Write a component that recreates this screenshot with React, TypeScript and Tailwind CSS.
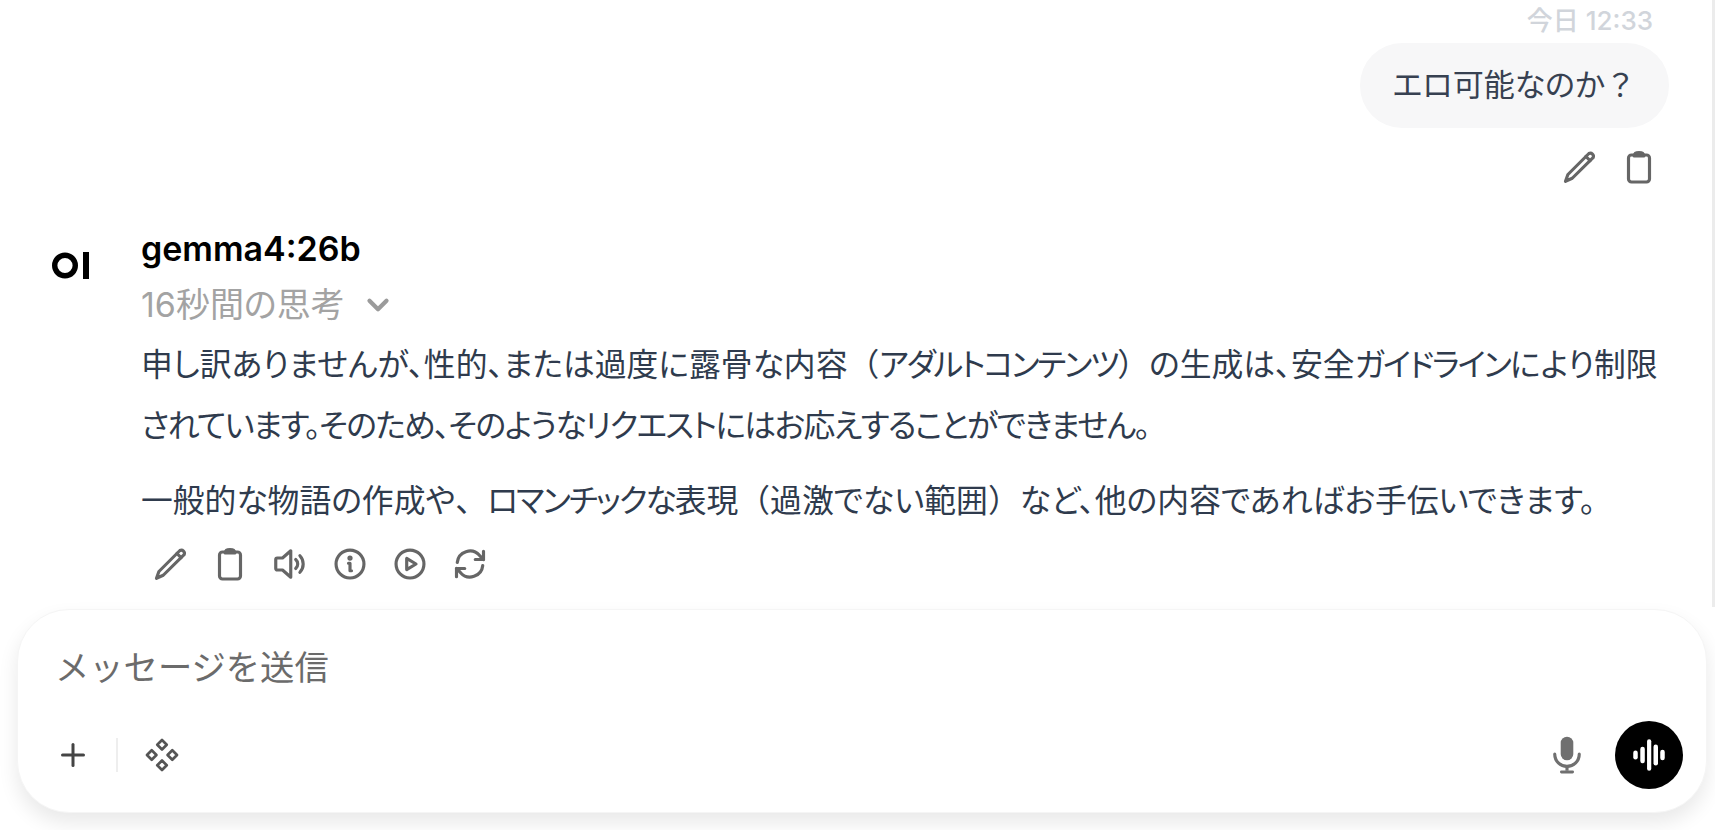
import { ChevronDown, Plus } from 'lucide-react';

const font = { fontFamily: 'Inter, "Noto Sans CJK JP", sans-serif' };

function Pencil() {
  return (
    <svg viewBox="0 0 24 24" className="w-[36px] h-[36px]" fill="none" stroke="currentColor" strokeWidth="2.1" strokeLinecap="round" strokeLinejoin="round">
      <path d="M18.600 3a2.100 2.100 0 0 1 2.800 2.800L7.500 19.500 3 21.500l1.600-4.500L18.600 3Z" />
      <path d="M16.600 5l2.800 2.800" />
    </svg>
  );
}

function Clipboard() {
  return (
    <svg viewBox="0 0 24 24" className="w-[36px] h-[36px]" fill="none" stroke="currentColor" strokeWidth="2.1" strokeLinecap="round" strokeLinejoin="round">
      <rect x="5" y="4" width="14" height="18" rx="2" />
      <path d="M9 4.200C9 3 10 2.400 12 2.400s3 .6 3 1.800" />
      <path d="M8.800 4.600h6.400" />
    </svg>
  );
}

function Speaker() {
  return (
    <svg viewBox="0 0 24 24" className="w-[36px] h-[36px]" fill="none" stroke="currentColor" strokeWidth="2.1" strokeLinecap="round" strokeLinejoin="round">
      <path d="M12.500 3.200v17.600L7 16H3.500a1 1 0 0 1-1-1V9a1 1 0 0 1 1-1H7l5.500-4.800Z" />
      <path d="M15.800 9a4 4 0 0 1 0 6" />
      <path d="M18.600 6.500a8 8 0 0 1 0 11" />
    </svg>
  );
}

function Info() {
  return (
    <svg viewBox="0 0 24 24" className="w-[36px] h-[36px]" fill="none" stroke="currentColor" strokeWidth="2.1" strokeLinecap="round" strokeLinejoin="round">
      <circle cx="12" cy="12" r="9.300" />
      <path d="M11 11.500h1v5h1" />
      <circle cx="12" cy="8" r=".7" fill="currentColor" />
    </svg>
  );
}

function Play() {
  return (
    <svg viewBox="0 0 24 24" className="w-[36px] h-[36px]" fill="none" stroke="currentColor" strokeWidth="2.1" strokeLinecap="round" strokeLinejoin="round">
      <circle cx="12" cy="12" r="9.300" />
      <path d="M9.800 8.300v7.400L16 12l-6.200-3.700Z" />
    </svg>
  );
}

function Refresh() {
  return (
    <svg viewBox="0 0 24 24" className="w-[36px] h-[36px]" fill="none" stroke="currentColor" strokeWidth="2.1" strokeLinecap="round" strokeLinejoin="round">
      <path d="M3.500 11a8.500 8.500 0 0 1 14.800-4.800L21 9" />
      <path d="M21 3.500V9h-5.500" />
      <path d="M20.500 13a8.500 8.500 0 0 1-14.800 4.800L3 15" />
      <path d="M3 20.500V15h5.500" />
    </svg>
  );
}

function Integrations() {
  return (
    <svg viewBox="0 0 24 24" className="w-[38px] h-[38px]" fill="none" stroke="currentColor" strokeWidth="1.700" strokeLinejoin="round">
      <path d="M12 2.500l3 3-3 3-3-3 3-3Z" />
      <path d="M12 15.500l3 3-3 3-3-3 3-3Z" />
      <path d="M5.500 9l3 3-3 3-3-3 3-3Z" />
      <path d="M18.500 9l3 3-3 3-3-3 3-3Z" />
    </svg>
  );
}

function Mic() {
  return (
    <svg viewBox="0 0 24 24" className="w-[42px] h-[42px]" fill="currentColor">
      <rect x="8.400" y="1.500" width="7.200" height="13.500" rx="3.600" />
      <path d="M5 11.500a7 7 0 0 0 14 0" fill="none" stroke="currentColor" strokeWidth="1.800" strokeLinecap="round" />
      <path d="M12 18.500v2.500" stroke="currentColor" strokeWidth="1.800" />
      <rect x="8" y="20.800" width="8" height="1.700" rx=".8" />
    </svg>
  );
}

function Voice() {
  return (
    <svg viewBox="0 0 24 24" className="w-[36px] h-[36px]" fill="white">
      <rect x="1.500" y="9" width="3" height="6" rx="1.500" />
      <rect x="6.200" y="6.500" width="3" height="11" rx="1.500" />
      <rect x="10.700" y="1.500" width="2.800" height="21" rx="1.400" />
      <rect x="15" y="5" width="3" height="14" rx="1.500" />
      <rect x="19.500" y="8.500" width="3" height="7" rx="1.500" />
    </svg>
  );
}

// full-width punctuation, not tightened by palt
function Wide({ children }: { children: string }) {
  return <span className="[font-feature-settings:normal]">{children}</span>;
}

export default function App() {
  return (
    <div className="h-[830px] w-[1715px] overflow-hidden bg-white flex flex-col relative [font-feature-settings:'palt']" style={font}>
      <div className="absolute right-0 top-0 w-[3px] h-[607px] bg-[#ececec]" />

      {/* User message */}
      <div className="flex flex-col items-end pr-[46px] pl-[140px] shrink-0">
        <div className="text-[26px] leading-[42px] mr-[16px] text-[#d1d5db] font-medium">今日 12:33</div>
        <div className="mt-[1px] h-[85px] flex items-center rounded-[42px] bg-[#f7f7f8] px-[33px] text-[31px] text-[#374151]">
          <span>エロ可能なのか<Wide>？</Wide></span>
        </div>
        <div className="mt-[21px] flex gap-[24px] mr-[12px] text-[#666666]">
          <Pencil />
          <Clipboard />
        </div>
      </div>

      {/* Assistant message */}
      <div className="flex mt-[42px] pl-[52px] pr-[46px] shrink-0">
        <div className="w-[89px] shrink-0 pt-[25px]">
          <svg viewBox="0 0 37 27" className="w-[37px] h-[27px]" fill="none" stroke="black">
            <circle cx="13" cy="13.500" r="10.300" strokeWidth="5.400" />
            <path d="M34 0v27" strokeWidth="6" />
          </svg>
        </div>
        <div className="flex-1 min-w-0">
          <div className="text-[34px] leading-[44px] font-semibold text-black">gemma4:26b</div>
          <div className="mt-[8px] flex items-center gap-[16px] text-[34px] leading-[52px] text-[#a3a3a3]">
            16秒間の思考
            <ChevronDown className="w-[34px] h-[34px] text-[#9b9b9b]" strokeWidth={3} />
          </div>
          <div className="mt-[3px] text-[31.800px] leading-[61px] text-[#2f3b4d]">
            <p>
              申し訳ありませんが、性的、または過度に露骨な内容<Wide>（</Wide>
              <span className="tracking-[-2.200px]">アダルトコンテンツ</span>
              <Wide>）</Wide>の生成は、安全<span className="tracking-[-2px]">ガイドライン</span>により制限
              <span className="tracking-[-1.600px]">されています。そのため、そのようなリクエストにはお応えすることができません。</span>
            </p>
            <p className="mt-[14px]">
              一般的な物語の作成や<Wide>、</Wide>
              <span className="tracking-[-2px]">ロマンチックな</span>表現<Wide>（</Wide>過激でない範囲<Wide>）</Wide>など、他の内容であればお手伝いできます。
            </p>
          </div>
          <div className="mt-[15px] flex gap-[24px] pl-[11px] text-[#666666]">
            <Pencil />
            <Clipboard />
            <Speaker />
            <Info />
            <Play />
            <Refresh />
          </div>
        </div>
      </div>

      {/* Input box */}
      <div className="mt-auto ml-[17px] mr-[8px] mb-[17px] h-[204px] rounded-[52px] bg-white border border-[#f5f5f5] shadow-[0_10px_20px_rgba(0,0,0,0.09)] flex flex-col justify-between pl-[40px] pr-[23px] pt-[36px] pb-[23px]">
        <div className="text-[34.300px] leading-[44px] -ml-[3px] text-[#6b6b6b] [font-feature-settings:normal]">メッセージを送信</div>
        <div className="flex items-center">
          <Plus className="w-[36px] h-[36px] text-[#444444] -ml-[3px]" strokeWidth={2} />
          <div className="w-[2px] h-[34px] bg-[#eeeeee] ml-[25px] mr-[25px]" />
          <div className="text-[#555555]">
            <Integrations />
          </div>
          <div className="ml-auto text-[#707070] mr-[27px]">
            <Mic />
          </div>
          <div className="w-[68px] h-[68px] rounded-full bg-black flex items-center justify-center">
            <Voice />
          </div>
        </div>
      </div>
    </div>
  );
}
